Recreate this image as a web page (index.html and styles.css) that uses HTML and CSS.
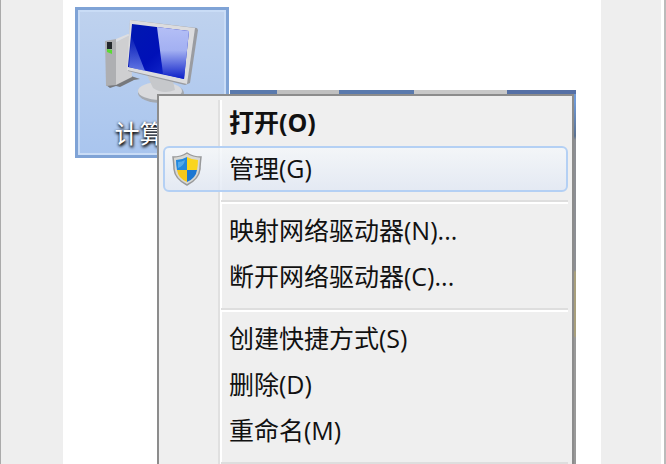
FILE: index.html
```html
<!DOCTYPE html>
<html lang="zh-CN">
<head>
    <meta charset="UTF-8">
    <title>计算机</title>
    <link rel="stylesheet" href="styles.css">
</head>
<body>
    <div class="page">
        <div class="sheet">
            <div class="shortcut">
                <svg class="pc" width="110" height="90" viewBox="0 0 110 90" aria-hidden="true">
                    <defs>
                        <linearGradient id="screen" x1="0" y1="0" x2="1" y2="1">
                            <stop offset="0" stop-color="#0018b0" />
                            <stop offset=".5" stop-color="#0010b8" />
                            <stop offset="1" stop-color="#2038d8" />
                        </linearGradient>
                        <linearGradient id="glare" x1="0" y1="0" x2="0" y2="1">
                            <stop offset="0" stop-color="#b4bff6" />
                            <stop offset=".45" stop-color="#a3b0f2" />
                            <stop offset="1" stop-color="#0c1fc8" />
                        </linearGradient>
                        <linearGradient id="shine" x1="0" y1="0" x2="0" y2="1">
                            <stop offset="0" stop-color="#8aa2f5" stop-opacity="0" />
                            <stop offset="1" stop-color="#8aa2f5" />
                        </linearGradient>
                    </defs>
                    <path d="M9 67l4 3 6-2 4 1 14-7 6-1-12-4z" fill="#77797d" />
                    <path d="M19 24l14-7 2 42-16 8z" fill="#cfcfd1" />
                    <path d="M8 23l11-2v46l-10 1z" fill="#aeafb2" />
                    <path d="M19 21l12-5 2 1-14 7z" fill="#dedee0" />
                    <path d="M10 24h5v7h-5z" fill="#24282c" />
                    <path d="M10 31l5 1v4l-5-2z" fill="#58dc32" />
                    <ellipse cx="64" cy="75" rx="23" ry="10" fill="#a4a9b0" />
                    <ellipse cx="63" cy="73" rx="22" ry="9" fill="#d9dadd" />
                    <path d="M50 57l26 6 2 9q-12 5-22-2z" fill="#c6c8cb" />
                    <path d="M33 2l67 8 1 2-8 53-5 2-57-14z" fill="#9a9ca1" />
                    <path d="M33 2l65 8-8 56-60-14z" fill="#dcdcde" />
                    <path d="M35 6l57 7-5 48-56-12z" fill="url(#screen)" />
                    <path d="M60 9l32 4-5 48-21-5z" fill="url(#glare)" />
                    <path d="M34 17l14 36-16-4z" fill="url(#shine)" opacity=".7" />
                </svg>
                <span class="shortcut-name">计算机</span>
            </div>

            <div class="window-behind">
                <div class="menu" role="menu">
                    <button type="button" class="item default" role="menuitem">打开(O)</button>
                    <button type="button" class="item hover" role="menuitem">
                        <svg class="shield" width="32" height="34" viewBox="0 0 32 34" aria-hidden="true">
                            <path d="M16 1q6 4 14 4-1 8-1 12-1 10-13 16-12-6-13-16 0-4-1-12 8 0 14-4z" fill="#d8d8d4" stroke="#98999a" stroke-width="1.5" />
                            <path d="M16 5v13H6q-1-5-1-10 6 0 11-3z" fill="#2288de" />
                            <path d="M16 5q5 3 11 3 0 5-1 10H16z" fill="#f9d51e" />
                            <path d="M6 18h10v12Q7 26 6 18z" fill="#f5c81c" />
                            <path d="M26 18H16v12q9-4 10-12z" fill="#1c77d2" />
                            <path d="M7 10q4 0 7-2-1 6-7 8z" fill="#65b8f2" opacity=".7" />
                        </svg>
                        管理(G)
                    </button>
                    <hr>
                    <button type="button" class="item" role="menuitem">映射网络驱动器(N)...</button>
                    <button type="button" class="item" role="menuitem">断开网络驱动器(C)...</button>
                    <hr>
                    <button type="button" class="item" role="menuitem">创建快捷方式(S)</button>
                    <button type="button" class="item" role="menuitem">删除(D)</button>
                    <button type="button" class="item" role="menuitem">重命名(M)</button>
                    <hr>
                </div>
            </div>
        </div>
    </div>
</body>
</html>
```
FILE: styles.css
```css
* {
    box-sizing: border-box;
}

body {
    margin: 0;
    background: #eee;
    color: #111;
    font: 25px/46px "Open Sans", "Noto Sans CJK SC", sans-serif;
}

.page {
    height: 100vh;
    overflow: hidden;
    padding: 0 60px 0 62px;
    border-left: 1px solid #aaa;
    border-right: 2px solid #bbb;
    box-shadow: inset -3px 0 0 #fff;
}

.sheet {
    position: relative;
    min-height: 100%;
    margin-right: 3px;
    padding: 7px 0 0 12px;
    background: #fff;
}

/* selected desktop icon */
.shortcut {
    display: flex;
    flex-direction: column;
    align-items: center;
    width: 154px;
    height: 151px;
    padding: 8px 0 0;
    border: 3px solid #7fa3d6;
    background: linear-gradient(#bfd2ee, #a9c5ee);
    box-shadow: inset 0 0 0 2px #c9dcf6;
}

.pc {
    flex: none;
}

.shortcut-name {
    color: #fff;
    line-height: 50px;
    text-shadow: 0 1px 3px #000, 1px 2px 3px #222;
}

/* context menu, lies over the icon */
.window-behind {
    position: absolute;
    top: 90px;
    left: 94px;
    right: 25px;
    padding: 4px 2px 0 0;
    background:
        linear-gradient(90deg, transparent 73px, #5a7aad 73px, #5a7aad 120px, #c0c0c0 120px, #c0c0c0 182px, #5a7aad 182px, #5a7aad 257px, #c8c8c8 257px, #c8c8c8 350px, #5570a5 350px) 0 0 / 100% 4px no-repeat,
        linear-gradient(#6f9ad8 12px, #5a7191 46px, #8d8f94 50px, #8d8f94 180px, #a89f7c 182px, #a89f7c 246px, #999 248px) 100% 0 / 2px 100% no-repeat;
}

.menu {
    padding: 4px;
    border: 2px solid #8c8c8c;
    background: linear-gradient(90deg, #e0e0e0 2px, #fff 2px) 59px 4px / 4px 100% no-repeat #efefef;
}

.item {
    display: block;
    position: relative;
    width: 100%;
    height: 46px;
    padding: 0 0 3px 64px;
    border: 2px solid transparent;
    border-radius: 6px;
    background: none;
    color: inherit;
    font: inherit;
    line-height: 38px;
    text-align: left;
}

.default {
    font-weight: bold;
}

.hover {
    border-color: #b4d0f4;
    background: linear-gradient(rgba(244, 247, 250, .8), rgba(225, 232, 244, .8));
}

.shield {
    position: absolute;
    top: 4px;
    left: 6px;
}

hr {
    height: 4px;
    margin: 8px 0 4px 58px;
    border: 0;
    border-top: 2px solid #dedede;
    border-bottom: 2px solid #fff;
}
```
